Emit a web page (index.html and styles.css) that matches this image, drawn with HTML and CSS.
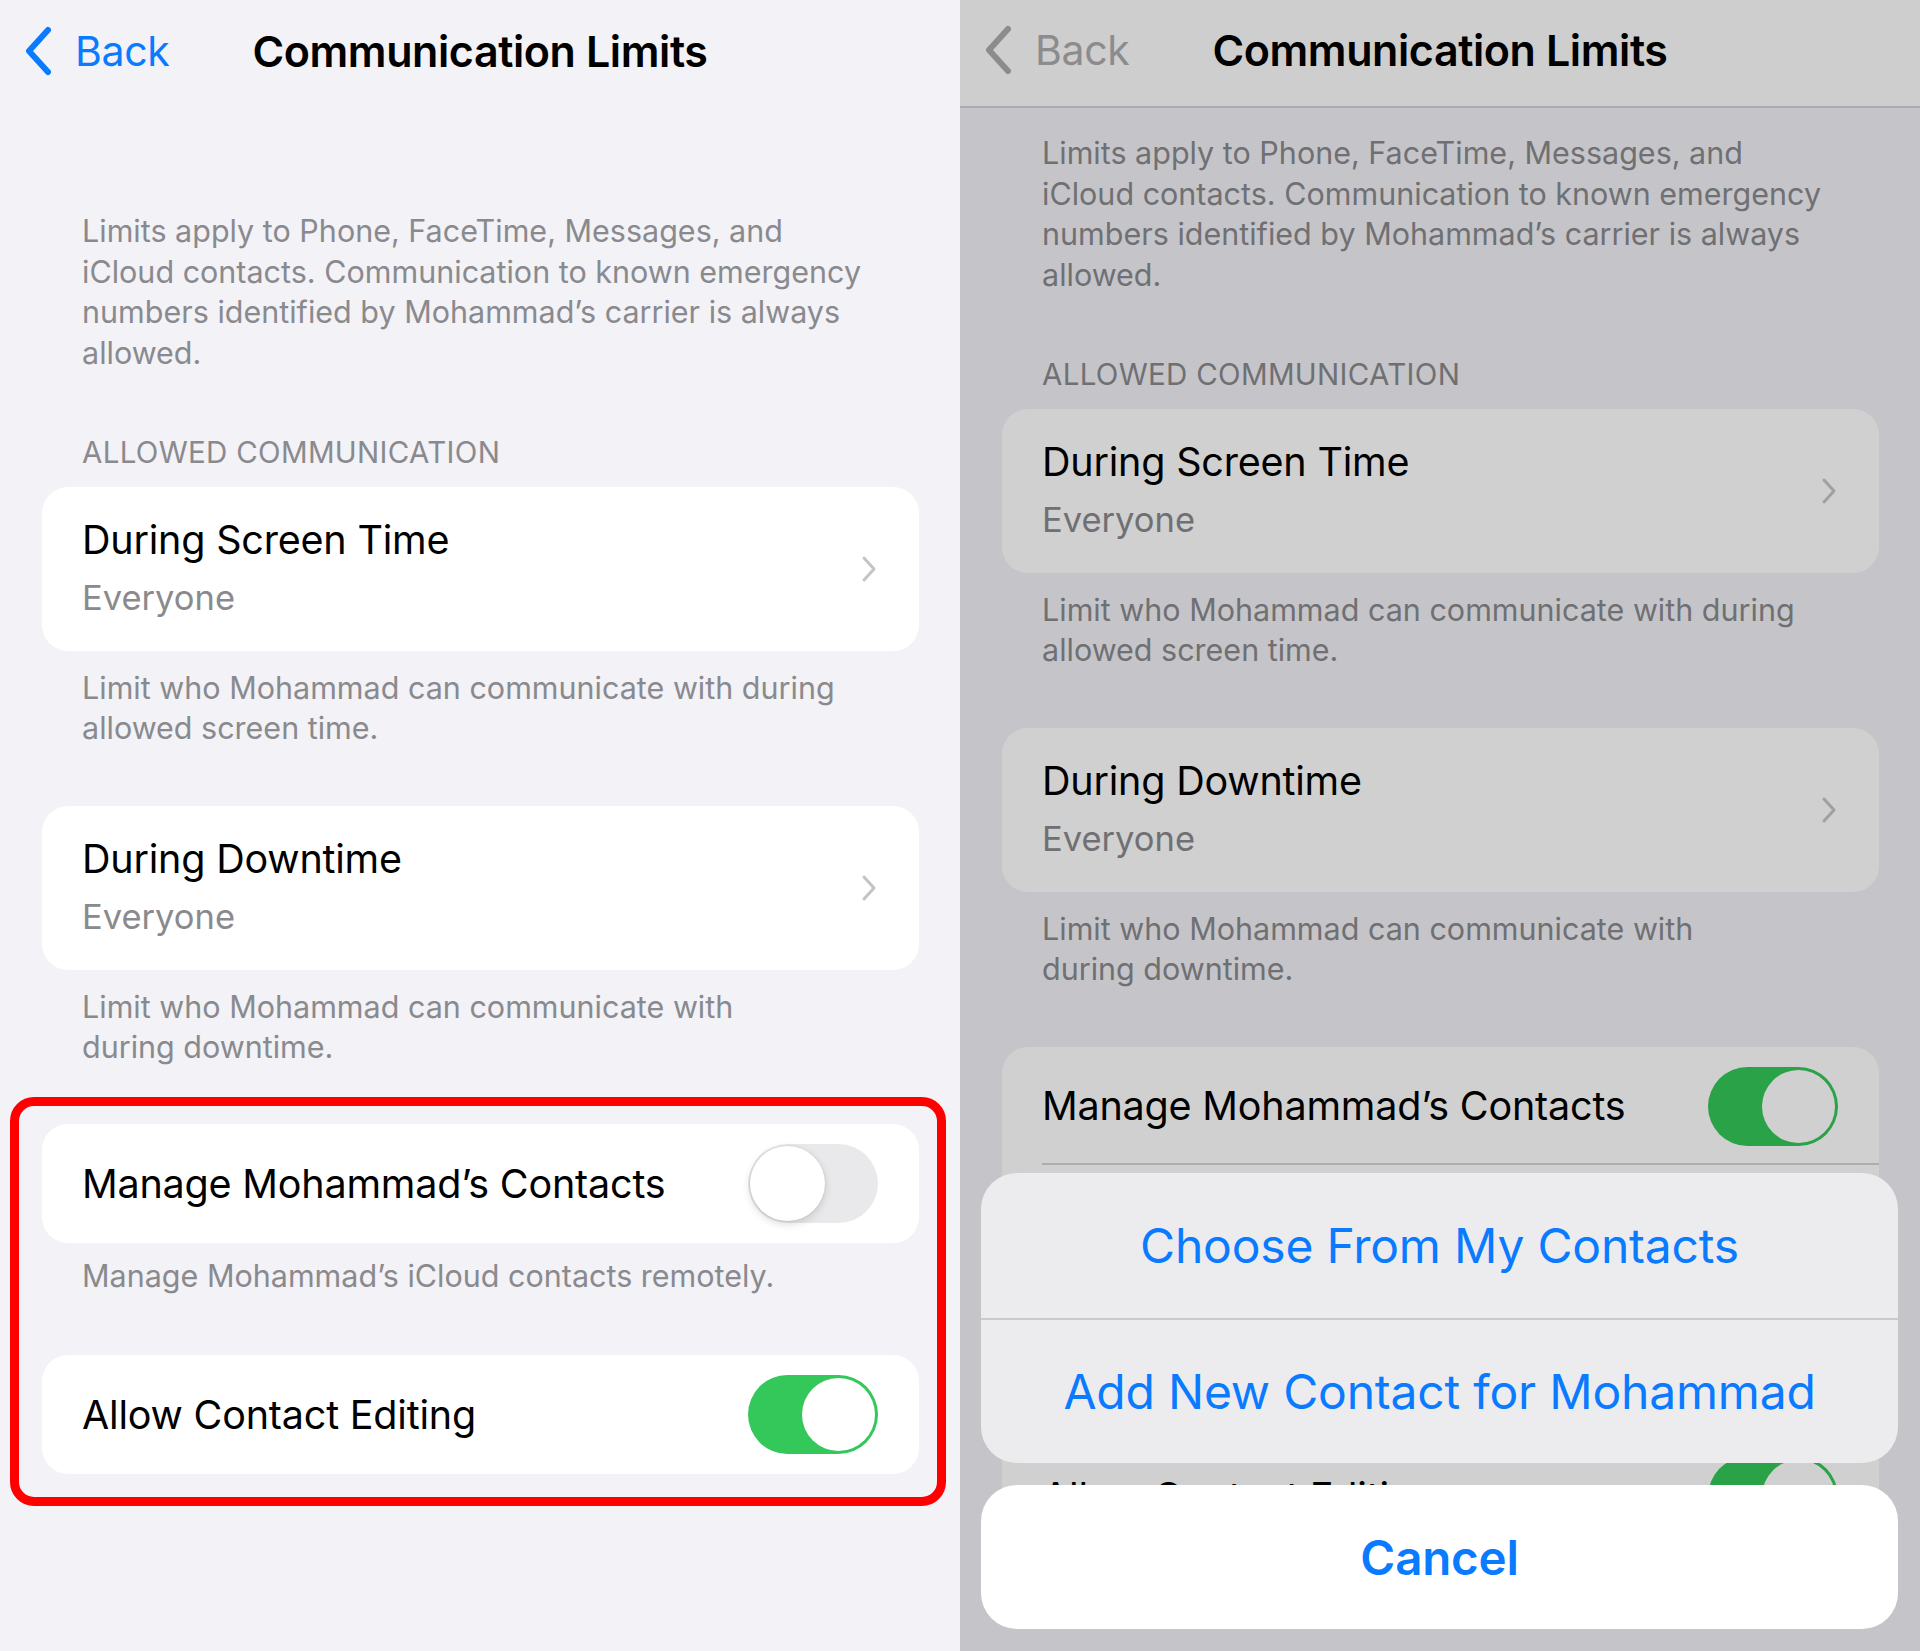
FILE: index.html
```html
<!DOCTYPE html>
<html lang="en">
<head>
<meta charset="utf-8">
<title>Communication Limits</title>
<link rel="stylesheet" href="styles.css">
</head>
<body>
<main class="screens">
  <section class="phone">
    <header class="nav">
      <a class="back" href="#">
        <svg class="back-chevron" viewBox="0 0 30 50" width="30" height="50" aria-hidden="true"><path d="M25 4 L6 25 L25 46" /></svg>
        <span>Back</span>
      </a>
      <h1 class="nav-title">Communication Limits</h1>
      <span class="nav-spacer"></span>
    </header>
    <div class="content">
      <p class="note note--intro">Limits apply to Phone, FaceTime, Messages, and<br>iCloud contacts. Communication to known emergency<br>numbers identified by Mohammad’s carrier is always<br>allowed.</p>
      <h2 class="section-head">ALLOWED COMMUNICATION</h2>
      <div class="card">
        <div class="row row--nav">
          <div class="row-text">
            <div class="row-title">During Screen Time</div>
            <div class="row-sub">Everyone</div>
          </div>
          <svg class="chevron" viewBox="0 0 16 28" width="16" height="28" aria-hidden="true"><path d="M3 3 L13 14 L3 25" /></svg>
        </div>
      </div>
      <p class="note">Limit who Mohammad can communicate with during<br>allowed screen time.</p>
      <div class="card card--spaced">
        <div class="row row--nav">
          <div class="row-text">
            <div class="row-title">During Downtime</div>
            <div class="row-sub">Everyone</div>
          </div>
          <svg class="chevron" viewBox="0 0 16 28" width="16" height="28" aria-hidden="true"><path d="M3 3 L13 14 L3 25" /></svg>
        </div>
      </div>
      <p class="note">Limit who Mohammad can communicate with<br>during downtime.</p>
      <div class="highlight">
        <div class="card">
          <div class="row row--toggle">
            <span class="row-title">Manage Mohammad’s Contacts</span>
            <span class="toggle"><span class="knob"></span></span>
          </div>
        </div>
        <p class="note note--tight">Manage Mohammad’s iCloud contacts remotely.</p>
        <div class="card card--spaced">
          <div class="row row--toggle">
            <span class="row-title">Allow Contact Editing</span>
            <span class="toggle toggle--on"><span class="knob"></span></span>
          </div>
        </div>
      </div>
    </div>
  </section>

  <section class="phone phone--modal">
    <header class="nav nav--bar">
      <a class="back back--dim" href="#">
        <svg class="back-chevron" viewBox="0 0 30 50" width="30" height="50" aria-hidden="true"><path d="M25 4 L6 25 L25 46" /></svg>
        <span>Back</span>
      </a>
      <h1 class="nav-title">Communication Limits</h1>
      <span class="nav-spacer"></span>
    </header>
    <div class="content content--scrolled">
      <p class="note note--intro">Limits apply to Phone, FaceTime, Messages, and<br>iCloud contacts. Communication to known emergency<br>numbers identified by Mohammad’s carrier is always<br>allowed.</p>
      <h2 class="section-head">ALLOWED COMMUNICATION</h2>
      <div class="card">
        <div class="row row--nav">
          <div class="row-text">
            <div class="row-title">During Screen Time</div>
            <div class="row-sub">Everyone</div>
          </div>
          <svg class="chevron" viewBox="0 0 16 28" width="16" height="28" aria-hidden="true"><path d="M3 3 L13 14 L3 25" /></svg>
        </div>
      </div>
      <p class="note">Limit who Mohammad can communicate with during<br>allowed screen time.</p>
      <div class="card card--spaced">
        <div class="row row--nav">
          <div class="row-text">
            <div class="row-title">During Downtime</div>
            <div class="row-sub">Everyone</div>
          </div>
          <svg class="chevron" viewBox="0 0 16 28" width="16" height="28" aria-hidden="true"><path d="M3 3 L13 14 L3 25" /></svg>
        </div>
      </div>
      <p class="note">Limit who Mohammad can communicate with<br>during downtime.</p>
      <div class="card card--spaced">
        <div class="row row--toggle row--sep">
          <span class="row-title">Manage Mohammad’s Contacts</span>
          <span class="toggle toggle--on"><span class="knob"></span></span>
        </div>
        <div class="row row--hidden"></div>
        <div class="row row--toggle">
          <span class="row-title">Allow Contact Editing</span>
          <span class="toggle toggle--on"><span class="knob"></span></span>
        </div>
      </div>
    </div>
    <div class="dim"></div>
    <div class="sheet">
      <div class="sheet-group">
        <button class="sheet-btn">Choose From My Contacts</button>
        <button class="sheet-btn">Add New Contact for Mohammad</button>
      </div>
      <button class="sheet-btn sheet-cancel">Cancel</button>
    </div>
  </section>
</main>
</body>
</html>
```

FILE: styles.css
```css
* { box-sizing: border-box; }

html, body {
  margin: 0;
  padding: 0;
}

body {
  width: 1920px;
  height: 1651px;
  overflow: hidden;
  font-family: "Inter", "Noto Sans", "Liberation Sans", sans-serif;
  color: #000;
  background: #f2f2f7;
}

.screens {
  display: flex;
  width: 1920px;
  height: 1651px;
}

.phone {
  position: relative;
  width: 960px;
  height: 1651px;
  background: #f2f2f7;
  overflow: hidden;
  display: flex;
  flex-direction: column;
}

/* ---------- nav ---------- */
.nav {
  height: 108px;
  flex: none;
  display: grid;
  grid-template-columns: 1fr auto 1fr;
  align-items: center;
  padding: 0 0 6px 0;
}

.nav--bar {
  background: #fdfdfd;
  border-bottom: 2px solid #d2d2d4;
}

.back {
  display: flex;
  align-items: center;
  gap: 22px;
  padding-left: 23px;
  color: #0a7aff;
  text-decoration: none;
  font-size: 41px;
  font-weight: 400;
  letter-spacing: -0.3px;
}

.back-chevron {
  display: block;
  flex: none;
}

.back-chevron path {
  fill: none;
  stroke: currentColor;
  stroke-width: 6;
  stroke-linecap: round;
  stroke-linejoin: round;
}

.back--dim {
  color: #acacae;
}

.nav-title {
  margin: 0;
  font-size: 43px;
  font-weight: 600;
  letter-spacing: -0.4px;
  white-space: nowrap;
}

/* ---------- content ---------- */
.content {
  padding: 0 41px 0 42px;
}

.note {
  margin: 17px 0 0;
  padding: 0 40px;
  font-size: 30.5px;
  line-height: 40px;
  color: #8a8a8e;
  letter-spacing: 0;
  white-space: nowrap;
}

.note--intro {
  margin-top: 103px;
  line-height: 40.5px;
}

.content--scrolled .note--intro {
  margin-top: 25px;
}

.note--tight {
  margin-top: 13px;
}

.section-head {
  margin: 61px 0 17px;
  padding: 0 40px;
  font-size: 29.5px;
  line-height: 36px;
  font-weight: 400;
  color: #8a8a8e;
  letter-spacing: 0.3px;
}

.card {
  background: #fff;
  border-radius: 26px;
  overflow: hidden;
}

.card--spaced {
  margin-top: 58px;
}

.row {
  display: flex;
  align-items: center;
  justify-content: space-between;
  padding: 0 41px 0 40px;
}

.row--nav {
  height: 164px;
  padding-right: 42px;
}

.row-text {
  display: flex;
  flex-direction: column;
  gap: 8px;
}

.row-title {
  font-size: 39.5px;
  line-height: 50px;
  letter-spacing: -0.2px;
  color: #000;
  white-space: nowrap;
}

.row-sub {
  font-size: 34.5px;
  line-height: 50px;
  color: #8a8a8e;
}

.chevron {
  display: block;
  flex: none;
}

.chevron path {
  fill: none;
  stroke: #c4c4c7;
  stroke-width: 3;
  stroke-linecap: round;
  stroke-linejoin: round;
}

.row--toggle {
  height: 119px;
}

.row--sep {
  height: 118px;
  position: relative;
}

.row--sep::after {
  content: "";
  position: absolute;
  left: 40px;
  right: 0;
  bottom: 0;
  height: 2px;
  background: #d6d6d8;
}

.row--hidden {
  height: 272px;
}

/* ---------- toggle ---------- */
.toggle {
  position: relative;
  flex: none;
  width: 130px;
  height: 79px;
  border-radius: 40px;
  background: #e9e9eb;
}

.toggle .knob {
  position: absolute;
  top: 2px;
  left: 2px;
  width: 75px;
  height: 75px;
  border-radius: 50%;
  background: #fff;
  box-shadow: 0 3px 8px rgba(0, 0, 0, 0.15), 0 0 0 1px rgba(0, 0, 0, 0.04);
}

.toggle--on {
  background: #34c759;
}

.toggle--on .knob {
  left: auto;
  right: 3px;
  top: 3px;
  width: 73px;
  height: 73px;
  box-shadow: none;
}

/* ---------- red highlight ---------- */
.highlight {
  margin: 30px -27px 0 -32px;
  border: 9px solid #ff0000;
  border-radius: 24px;
  padding: 18px 18px 23px 23px;
}

.highlight .card--spaced {
  margin-top: 59px;
}

/* ---------- modal ---------- */
.dim {
  position: absolute;
  inset: 0;
  background: rgba(0, 0, 0, 0.185);
}

.sheet {
  position: absolute;
  left: 21px;
  right: 22px;
  bottom: 22px;
  display: flex;
  flex-direction: column;
  gap: 22px;
}

.sheet-group {
  display: flex;
  flex-direction: column;
  background: #ececee;
  border-radius: 36px;
  overflow: hidden;
}

.sheet-btn {
  display: block;
  width: 100%;
  height: 145px;
  border: 0;
  margin: 0;
  padding: 0;
  background: transparent;
  font-family: inherit;
  font-size: 48px;
  font-weight: 400;
  color: #0a7aff;
  letter-spacing: -0.2px;
}

.sheet-group .sheet-btn + .sheet-btn {
  border-top: 2px solid #cacacc;
}

.sheet-cancel {
  height: 144px;
  background: #fff;
  border-radius: 36px;
  font-size: 47.5px;
  font-weight: 600;
}
```
